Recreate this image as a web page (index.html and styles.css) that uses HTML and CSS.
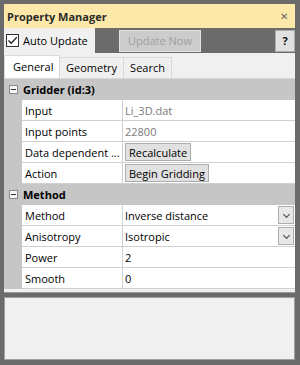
FILE: index.html
```html
<!DOCTYPE html>
<html lang="en">
<head>
    <meta charset="UTF-8">
    <meta name="viewport" content="width=device-width, initial-scale=1.0">
    <title>Property Manager</title>
    <link rel="stylesheet" href="styles.css">
</head>
<body>

    <div class="window">
        <div class="titlebar">
            <span class="title">Property Manager</span>
            <span class="close">&#x2715;</span>
        </div>

        <div class="toolbar">
            <label class="auto-update">
                <span class="checkbox">
                    <svg width="11" height="11" viewBox="0 0 11 11"><path d="M1.5 5.5 L4.2 8.3 L9.8 2.2" fill="none" stroke="#222" stroke-width="1.3"/></svg>
                </span>
                Auto Update
            </label>
            <button class="update-now" disabled>Update Now</button>
            <button class="help">?</button>
        </div>

        <div class="tabs">
            <div class="tab active">General</div>
            <div class="tab">Geometry</div>
            <div class="tab">Search</div>
        </div>

        <div class="grid">
            <div class="category"><span class="toggle"></span>Gridder (id:3)</div>
            <div class="row"><div class="name">Input</div><div class="value readonly">Li_3D.dat</div></div>
            <div class="row"><div class="name">Input points</div><div class="value readonly">22800</div></div>
            <div class="row"><div class="name">Data dependent ...</div><div class="value"><span class="cell-button">Recalculate</span></div></div>
            <div class="row"><div class="name">Action</div><div class="value"><span class="cell-button">Begin Gridding</span></div></div>

            <div class="category"><span class="toggle"></span>Method</div>
            <div class="row"><div class="name">Method</div><div class="value">Inverse distance<span class="drop"></span></div></div>
            <div class="row"><div class="name">Anisotropy</div><div class="value">Isotropic<span class="drop"></span></div></div>
            <div class="row"><div class="name">Power</div><div class="value">2</div></div>
            <div class="row"><div class="name">Smooth</div><div class="value">0</div></div>
        </div>

        <div class="description"></div>
    </div>

</body>
</html>
```

FILE: styles.css
```css
body {
    margin: 0;
    font-family: 'Open Sans', 'Noto Sans', sans-serif;
    font-size: 11px;
    color: #000;
    background-color: #6b6b6b;
}

.window {
    width: 300px;
    height: 365px;
    box-sizing: border-box;
    padding: 4px 5px 5px 4px;
    display: flex;
    flex-direction: column;
    background-color: #6b6b6b;
}

.titlebar {
    height: 24px;
    display: flex;
    align-items: center;
    justify-content: space-between;
    padding: 0 7px 0 3px;
    background-color: #fce8a8;
}

.title {
    font-weight: bold;
    color: #2b2b2b;
}

.close {
    color: #666;
    font-size: 10px;
}

.toolbar {
    height: 25px;
    display: flex;
    align-items: center;
}

.auto-update {
    width: 91px;
    height: 25px;
    box-sizing: border-box;
    display: flex;
    align-items: center;
    gap: 4px;
    padding-left: 2px;
    background-color: #f0f0f0;
}

.checkbox {
    width: 13px;
    height: 13px;
    box-sizing: border-box;
    border: 1px solid #333;
    background-color: #fff;
    display: flex;
    align-items: center;
    justify-content: center;
}

button {
    font-family: inherit;
    font-size: 11px;
    padding: 0;
    height: 22px;
    box-sizing: border-box;
}

.update-now {
    width: 82px;
    margin-left: 24px;
    background-color: #cccccc;
    border: 1px solid #e3e3e3;
    color: #a0a0a0;
}

.help {
    width: 20px;
    margin-left: auto;
    background-color: #e1e1e1;
    border: 1px solid #adadad;
    font-weight: bold;
    color: #111;
}

.tabs {
    height: 25px;
    display: flex;
    align-items: flex-end;
    background-color: #f0f0f0;
    border-bottom: 1px solid #d9d9d9;
}

.tab {
    height: 21px;
    line-height: 20px;
    padding: 0 6px;
    box-sizing: border-box;
    border: 1px solid #d9d9d9;
    border-bottom: none;
    border-left: none;
}

.tab.active {
    height: 23px;
    line-height: 22px;
    width: 56px;
    padding-left: 8px;
    background-color: #fff;
    border-left: 1px solid #d9d9d9;
}

.grid {
    flex: 1;
    background-color: #f0f0f0;
    border-bottom: 1px solid #9a9a9a;
    margin-bottom: 4px;
}

.category {
    height: 21px;
    display: flex;
    align-items: center;
    background-color: #c6c6c6;
    font-weight: bold;
}

.toggle {
    width: 9px;
    height: 9px;
    margin: 0 5px 0 5px;
    box-sizing: border-box;
    border: 1px solid #8a8a8a;
    background-color: #f7f7f7;
    position: relative;
}

.toggle::after {
    content: "";
    position: absolute;
    left: 1px;
    top: 3px;
    width: 5px;
    height: 1px;
    background-color: #333;
}

.row {
    height: 21px;
    display: flex;
    background-color: #c6c6c6;
    padding-left: 18px;
}

.name,
.value {
    background-color: #fff;
    border-bottom: 1px solid #d0d0d0;
    box-sizing: border-box;
    display: flex;
    align-items: center;
}

.name {
    width: 101px;
    padding-left: 3px;
    border-right: 1px solid #d0d0d0;
    white-space: nowrap;
    overflow: hidden;
}

.value {
    flex: 1;
    padding-left: 2px;
    position: relative;
}

.readonly {
    color: #7a7a7a;
}

.cell-button {
    height: 18px;
    line-height: 17px;
    box-sizing: border-box;
    padding: 0 3px;
    background-color: #e1e1e1;
    border: 1px solid #adadad;
}

.drop {
    position: absolute;
    right: 1px;
    top: 1px;
    width: 16px;
    height: 18px;
    box-sizing: border-box;
    border: 1px solid #adadad;
    background-color: #e8e8e8;
}

.drop::after {
    content: "";
    position: absolute;
    left: 5px;
    top: 5px;
    width: 4px;
    height: 4px;
    border-right: 1px solid #444;
    border-bottom: 1px solid #444;
    transform: rotate(45deg);
}

.description {
    height: 63px;
    box-sizing: border-box;
    border: 1px solid #a0a0a0;
    background-color: #f0f0f0;
}
```
